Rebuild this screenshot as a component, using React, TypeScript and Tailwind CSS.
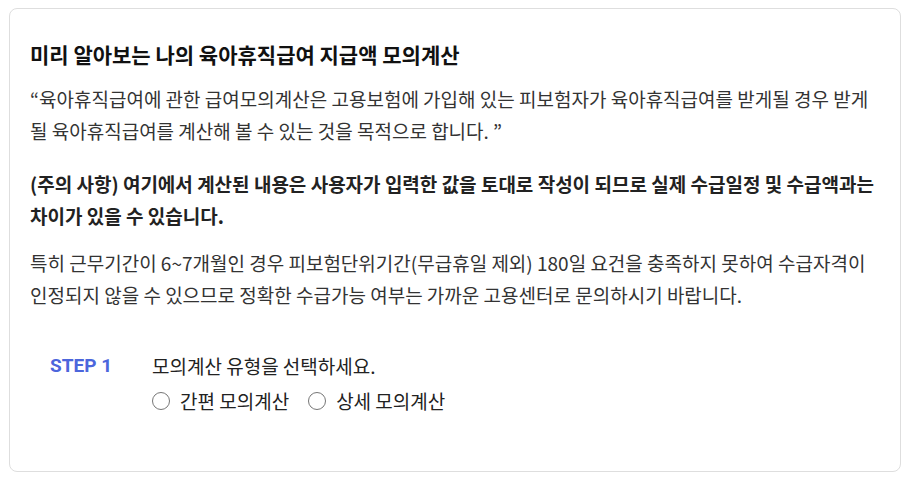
export default function App() {
  return (
    <div className="min-h-[479px] bg-white font-['Noto_Sans_CJK_KR','Noto_Sans',sans-serif] text-[#333]">
      <div className="ml-[9px] mt-2 h-[464px] w-[892px] rounded-lg border border-[#dedede] bg-white px-5 pt-[30px]">
        <h2 className="text-[21px] font-bold leading-[30px] text-[#111]">
          미리 알아보는 나의 육아휴직급여 지급액 모의계산
        </h2>

        <p className="mt-[14px] text-[19px] leading-[32px]">
          “육아휴직급여에 관한 급여모의계산은 고용보험에 가입해 있는 피보험자가 육아휴직급여를 받게될 경우 받게
          될 육아휴직급여를 계산해 볼 수 있는 것을 목적으로 합니다. ”
        </p>

        <p className="mt-[21px] text-[19px] font-bold leading-[32px] text-[#222]">
          (주의 사항) 여기에서 계산된 내용은 사용자가 입력한 값을 토대로 작성이 되므로 실제 수급일정 및 수급액과는
          차이가 있을 수 있습니다.
        </p>

        <p className="mt-[15px] text-[19px] leading-[32px]">
          특히 근무기간이 6~7개월인 경우 피보험단위기간(무급휴일 제외) 180일 요건을 충족하지 못하여 수급자격이
          인정되지 않을 수 있으므로 정확한 수급가능 여부는 가까운 고용센터로 문의하시기 바랍니다.
        </p>

        <div className="mt-[42px] flex pl-5">
          <div className="w-[102px] font-['Roboto','Noto_Sans_CJK_KR',sans-serif] text-[19px] font-bold leading-[26px] text-[#4c66dc]">
            STEP 1
          </div>
          <div>
            <div className="text-[19px] leading-[26px] text-[#222]">모의계산 유형을 선택하세요.</div>
            <div className="mt-[9px] flex items-center gap-[19px] text-[19px] leading-[26px] text-[#222]">
              <label className="flex items-center gap-[10px]">
                <span className="h-[18px] w-[18px] rounded-full border border-[#767676] bg-white" />
                간편 모의계산
              </label>
              <label className="flex items-center gap-[10px]">
                <span className="h-[18px] w-[18px] rounded-full border border-[#767676] bg-white" />
                상세 모의계산
              </label>
            </div>
          </div>
        </div>
      </div>
    </div>
  );
}
